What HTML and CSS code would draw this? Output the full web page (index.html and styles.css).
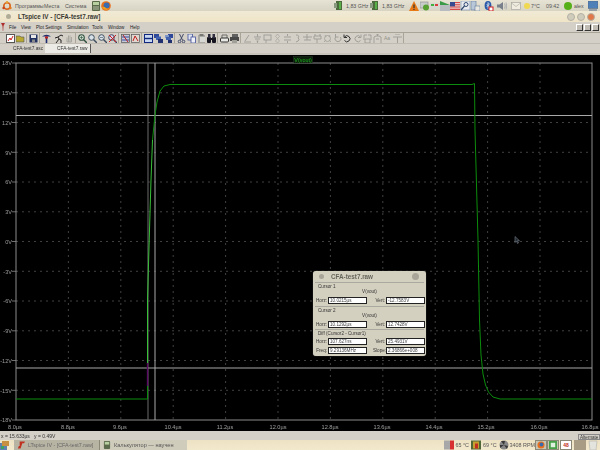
FILE: index.html
```html
<!DOCTYPE html><html lang="ru">
<head>
  <meta charset="UTF-8" />
  <title>LTspice IV - [CFA-test7.raw]</title>
  <link rel="stylesheet" href="styles.css">
</head>
<body>
<div class="screen">

  <div class="panel">
    <div class="panel-left">
      <svg class="ic-logo" viewBox="0 0 10 10"><circle cx="5" cy="5" r="3.2" fill="none" stroke="#d9641e" stroke-width="1.6"/><circle cx="5" cy="1.2" r="1.2" fill="#e8a030"/><circle cx="1.6" cy="7" r="1.2" fill="#c8401a"/><circle cx="8.4" cy="7" r="1.2" fill="#e87a1c"/></svg>
      <span class="panel-menu m-prog">Программы</span>
      <span class="panel-menu m-mesta">Места</span>
      <span class="panel-menu m-sys">Система</span>
      <svg class="ic-10 m-calc" viewBox="0 0 10 10"><rect x="1" y="0" width="8" height="10" rx="1" fill="#5c6a4c"/><rect x="2" y="1" width="6" height="3" fill="#b8d0a0"/><rect x="2" y="5" width="6" height="4" fill="#8a9478"/></svg>
      <svg class="ic-10" viewBox="0 0 10 10"><circle cx="5" cy="5" r="4.8" fill="#e8701c"/><circle cx="5.6" cy="4.4" r="3" fill="#3a6ab0"/><path d="M1 6c1 3 5 4 8 1-2 1-4 1-5-1z" fill="#f0a020"/></svg>
    </div>
    <div class="panel-right">
      <svg class="ic-cpu" viewBox="0 0 9 9"><rect x="2" y="0" width="6" height="9" fill="#4c6a3c"/><rect x="0" y="2" width="3" height="5" fill="#8a9a80"/><rect x="5" y="1" width="2" height="7" fill="#58b048"/></svg>
      <span class="freq">1,83 GHz</span>
      <svg class="ic-cpu m-cpu2" viewBox="0 0 9 9"><rect x="2" y="0" width="6" height="9" fill="#4c6a3c"/><rect x="0" y="2" width="3" height="5" fill="#8a9a80"/><rect x="5" y="1" width="2" height="7" fill="#58b048"/></svg>
      <span class="freq">1,83 GHz</span>
      <svg class="ic-10 m-warn" viewBox="0 0 10 10"><path d="M5 0l5 10H0z" fill="#e87a18"/><rect x="4.4" y="3.5" width="1.2" height="3.5" fill="#333"/><rect x="4.4" y="7.8" width="1.2" height="1.2" fill="#333"/></svg>
      <svg class="ic-10" viewBox="0 0 10 10"><rect x="0" y="1" width="8" height="6" fill="#c8ccc8" stroke="#888" stroke-width=".6"/><circle cx="6" cy="6.5" r="3" fill="#58a030"/></svg>
      <svg class="ic-10" viewBox="0 0 10 10"><rect x="0" y="2" width="10" height="6" fill="#d8d8d0"/><rect x="1" y="3" width="3" height="2" fill="#40b040"/><rect x="5" y="3" width="3" height="2" fill="#d84040"/></svg>
      <svg class="ic-10" viewBox="0 0 10 10"><rect x="0" y="4" width="10" height="6" fill="#b8bcc0"/><path d="M0 0l10 4H0z" fill="#3a9a48"/></svg>
      <svg class="ic-10" viewBox="0 0 10 8"><rect width="10" height="8" fill="#d84848"/><rect y="1.2" width="10" height="1" fill="#f0e8e8"/><rect y="3.4" width="10" height="1" fill="#f0e8e8"/><rect y="5.6" width="10" height="1" fill="#f0e8e8"/><rect width="5" height="4.4" fill="#3a4a90"/></svg>
      <svg class="ic-10" viewBox="0 0 10 10"><rect x="1" y="0" width="9" height="9" fill="#e8ecf0" stroke="#7088a8" stroke-width=".6"/><circle cx="6" cy="3.5" r="2" fill="none" stroke="#304870"/><path d="M4.5 5L1 9" stroke="#304870" stroke-width="1.2"/></svg>
      <svg class="ic-10" viewBox="0 0 10 10"><rect x="1" y="0" width="5" height="9" fill="#b8c8d8" stroke="#607898" stroke-width=".6"/><rect x="5" y="5" width="5" height="5" fill="#e8e8e0" stroke="#607898" stroke-width=".6"/></svg>
      <svg class="ic-10 m-bt" viewBox="0 0 10 10"><ellipse cx="4" cy="4.5" rx="3.4" ry="4.5" fill="#2a5aa8"/><path d="M2.6 3l2.8 3L4 7.5v-6L5.4 3 2.6 6" fill="none" stroke="#fff" stroke-width=".6"/><rect x="5" y="6" width="4" height="4" fill="#fff" stroke="#d02020"/></svg>
      <svg class="ic-10 m-vol" viewBox="0 0 10 10"><path d="M0 3.5h2.5L6 1v8L2.500 6.500H0z" fill="#78808c"/><path d="M7.500 2.500q1.500 2.500 0 5M9 1.500q1.500 3.500 0 7" fill="none" stroke="#98a0a8" stroke-width=".7"/></svg>
      <svg class="ic-10 m-mail" viewBox="0 0 10 8"><rect x=".5" y=".5" width="9" height="7" fill="#f0ece0" stroke="#a8a8a0" stroke-width=".7"/><path d="M.5 1l4.500 3.500L9.500 1" fill="none" stroke="#a8a8a0" stroke-width=".6"/></svg>
      <i class="sun"></i>
      <span class="temp">7°C</span>
      <span class="clock">09:42</span>
      <i class="user-dot"></i>
      <span class="user">alex</span>
      <svg class="ic-10 m-mon" viewBox="0 0 10 10"><rect y="0" width="10" height="7.500" fill="#5080b8" stroke="#506070" stroke-width=".5"/><rect x="1" y="8" width="8" height="2" fill="#98a0a8"/></svg>
    </div>
  </div>

  <div class="titlebar">
    <i class="win-dot"></i>
    <span class="title">LTspice IV - [CFA-test7.raw]</span>
    <div class="win-btns">
      <i class="win-btn"></i><i class="win-btn"></i><i class="win-btn close"></i>
    </div>
  </div>

  <div class="menubar">
    <svg class="pin" viewBox="0 0 4 8"><path d="M0 0h4L2.500 3 2.200 8h-.4L1.500 3z" fill="#b03030"/></svg>
    <span class="menu-item w-file">File</span>
    <span class="menu-item w-view">View</span>
    <span class="menu-item w-plot">Plot Settings</span>
    <span class="menu-item w-sim">Simulation</span>
    <span class="menu-item w-tools">Tools</span>
    <span class="menu-item w-win">Window</span>
    <span class="menu-item">Help</span>
    <div class="mdi-btns"><i></i><i></i><i></i></div>
  </div>

  <div class="toolbar">
    <b class="tb"><svg viewBox="0 0 9 9"><rect x=".5" y=".5" width="8" height="8" fill="#fff" stroke="#555"/><path d="M2 7l2-3 1 2 2-4" fill="none" stroke="#d02020"/></svg></b>
    <b class="tb"><svg viewBox="0 0 9 9"><path d="M0 2h4l1 1h3v5H0z" fill="#b8a830" stroke="#555" stroke-width=".6"/></svg></b>
    <i class="sep"></i>
    <b class="tb"><svg viewBox="0 0 9 9"><rect x=".5" y=".5" width="8" height="8" fill="#203060"/><rect x="2" y="1" width="5" height="3" fill="#e8e8e8"/><rect x="3" y="5.500" width="3" height="3" fill="#8a8a8a"/></svg></b>
    <i class="sep"></i>
    <b class="tb"><svg viewBox="0 0 9 9"><path d="M0 2.500Q4.500-1 9 2.500z" fill="#1c2a70"/><path d="M4.500 2.500V9" stroke="#1c2a70" stroke-width="1.600"/><rect x="3" y="2.500" width="3" height="2" fill="#c02020"/></svg></b>
    <i class="gap"></i>
    <b class="tb"><svg viewBox="0 0 9 9"><path d="M1 9l3-4-1-2 3-2 2 1M4 5l2 1v3M3 3L0 4" fill="none" stroke="#222" stroke-width="1"/></svg></b>
    <b class="tb"><svg viewBox="0 0 9 9"><path d="M2 8V3.500M3.500 8V1.500M5 8V1.500M6.500 8V3M2 8h4.500" fill="none" stroke="#a8a8a0"/></svg></b>
    <i class="sep"></i>
    <b class="tb"><svg viewBox="0 0 9 9"><circle cx="3.500" cy="3.500" r="2.800" fill="#d0e0d0" stroke="#305040" stroke-width="1.100"/><path d="M5.500 5.500L9 9" stroke="#305040" stroke-width="1.500"/><path d="M2 3.500h3M3.500 2v3" stroke="#305040" stroke-width=".6"/></svg></b>
    <b class="tb"><svg viewBox="0 0 9 9"><circle cx="3.500" cy="3.500" r="2.800" fill="#d8e0e8" stroke="#405060" stroke-width="1"/><path d="M5.500 5.500L9 9" stroke="#405060" stroke-width="1.500"/></svg></b>
    <b class="tb"><svg viewBox="0 0 9 9"><circle cx="3.500" cy="3.500" r="2.800" fill="#d8e0e8" stroke="#405060" stroke-width="1"/><path d="M5.500 5.500L9 9" stroke="#405060" stroke-width="1.500"/><path d="M2 3.500h3" stroke="#405060" stroke-width=".6"/></svg></b>
    <b class="tb"><svg viewBox="0 0 9 9"><circle cx="3.500" cy="3.500" r="2.800" fill="#d8d8e8" stroke="#404060" stroke-width="1"/><path d="M5.500 5.500L9 9" stroke="#404060" stroke-width="1.500"/><path d="M1 1l7 7M8 1L1 8" stroke="#c82020" stroke-width="1"/></svg></b>
    <i class="sep"></i>
    <b class="tb"><svg viewBox="0 0 9 9"><rect x=".5" y=".5" width="8" height="8" fill="#c8c8d8" stroke="#555" stroke-width=".7"/><path d="M1 3h7M1 6h7" stroke="#3050a0"/><path d="M2 1l5 7" stroke="#c02020"/></svg></b>
    <b class="tb"><svg viewBox="0 0 9 9"><rect x=".5" y=".5" width="8" height="8" fill="#e0d8d0" stroke="#555" stroke-width=".7"/><path d="M2 7l2-5 3 5" fill="none" stroke="#c02020"/></svg></b>
    <i class="sep"></i>
    <b class="tb"><svg viewBox="0 0 9 9"><rect x=".5" y=".5" width="8" height="8" fill="#c8d8f0" stroke="#102880"/><path d="M0 4.500h9" stroke="#102880" stroke-width="1.400"/></svg></b>
    <b class="tb"><svg viewBox="0 0 9 9"><rect x="0" y="0" width="5" height="4" fill="#304898"/><rect x="2" y="2.500" width="5" height="3.500" fill="#4060b0"/><rect x="4" y="5" width="5" height="4" fill="#203070"/></svg></b>
    <b class="tb"><svg viewBox="0 0 9 9"><rect x="4" y="0" width="5" height="4" fill="#304898"/><rect x="1" y="1" width="4" height="3" fill="#8098c8"/><rect x="2" y="3" width="5" height="3" fill="#4060b0"/><rect x="4" y="6" width="4" height="3" fill="#203070"/></svg></b>
    <i class="sep"></i>
    <b class="tb"><svg viewBox="0 0 9 9"><path d="M2.500 0l3 6M6.500 0l-3 6" stroke="#404868" stroke-width="1"/><circle cx="2.500" cy="7.500" r="1.300" fill="none" stroke="#404868"/><circle cx="6.500" cy="7.500" r="1.300" fill="none" stroke="#404868"/></svg></b>
    <b class="tb"><svg viewBox="0 0 9 9"><rect x="1" y="0" width="4.500" height="6" fill="#e0e4f0" stroke="#405098" stroke-width=".8"/><rect x="4" y="3" width="4.500" height="6" fill="#f0f0f8" stroke="#405098" stroke-width=".8"/></svg></b>
    <b class="tb"><svg viewBox="0 0 9 9"><rect x="1" y="1" width="7" height="8" fill="#a8a8a4"/><rect x="2.500" y="0" width="4" height="2" fill="#787874"/><rect x="3" y="3" width="5" height="5" fill="#d8d8d4"/></svg></b>
    <b class="tb"><svg viewBox="0 0 9 9"><rect x="0" y="3" width="4" height="6" rx="1" fill="#151520"/><rect x="5" y="3" width="4" height="6" rx="1" fill="#151520"/><rect x="1" y="0" width="2.500" height="4" fill="#303040"/><rect x="5.500" y="0" width="2.500" height="4" fill="#303040"/><rect x="3" y="4" width="3" height="2" fill="#151520"/></svg></b>
    <i class="sep"></i>
    <b class="tb"><svg viewBox="0 0 9 9"><path d="M2 4V1h5v3" fill="none" stroke="#555" stroke-width=".8"/><rect x=".5" y="4" width="8" height="4" rx="1" fill="#e8e8e4" stroke="#333"/></svg></b>
    <b class="tb"><svg viewBox="0 0 9 9"><rect x="2" y="0" width="6" height="3" fill="#606060"/><rect x="0" y="3" width="9" height="4" fill="#484848"/><rect x="2" y="6" width="5" height="3" fill="#a0a098"/></svg></b>
    <i class="sep"></i>
    <span class="tb off"><svg viewBox="0 0 9 9"><path d="M1 8h7M2 7l4-6" fill="none" stroke="#a0a098"/></svg></span>
    <span class="tb off"><svg viewBox="0 0 9 9"><path d="M4.500 0v3M1 3h7M2 5h5M3.500 7h2M4.500 7v2" fill="none" stroke="#a0a098"/></svg></span>
    <span class="tb off"><svg viewBox="0 0 9 9"><rect x="1" y="1" width="7" height="5" fill="none" stroke="#a0a098"/><path d="M3 6v3" stroke="#a0a098"/></svg></span>
    <span class="tb off"><svg viewBox="0 0 9 9"><path d="M4.500 0l2 2.500-2 2-2-2zM4.500 4.500l2 2.500-2 2-2-2z" fill="none" stroke="#a8a8a0" stroke-width=".8"/></svg></span>
    <span class="tb off"><svg viewBox="0 0 9 9"><path d="M1 3h7M1 6h7M4.500 0v2M4.500 7v2" stroke="#a0a098"/></svg></span>
    <span class="tb off"><svg viewBox="0 0 9 9"><path d="M3 1q4 0 2 3 3 2-2 4" fill="none" stroke="#a0a098"/></svg></span>
    <span class="tb off"><svg viewBox="0 0 9 9"><path d="M0 3h9M4 0v6M1 6h7" stroke="#a0a098"/></svg></span>
    <span class="tb off"><svg viewBox="0 0 9 9"><path d="M1 2h7v3H1zM4 5v4M2 2V0M7 2V0" fill="none" stroke="#a0a098"/></svg></span>
    <span class="tb off"><svg viewBox="0 0 9 9"><circle cx="4.500" cy="4.500" r="3" fill="none" stroke="#a8a8a0"/><path d="M2 1l1 2M7 1L6 3M1 8l2-2M8 8L6 6" stroke="#a8a8a0"/></svg></span>
    <span class="tb off"><svg viewBox="0 0 9 9"><path d="M7.500 3a3 3 0 1 1-5 0M2.500 0v3h3" fill="none" stroke="#a0a098"/></svg></span>
    <b class="tb"><svg viewBox="0 0 9 9"><path d="M1.500 3a3 3 0 1 1 0 3.500M1 .5V3.500h3" fill="none" stroke="#303030" stroke-width="1"/></svg></b>
    <span class="tb off"><svg viewBox="0 0 9 9"><path d="M7.500 3a3 3 0 1 0 0 3.500M8 .5V3.500H5" fill="none" stroke="#a0a098"/></svg></span>
    <span class="tb off"><svg viewBox="0 0 9 9"><path d="M1 4V1h3M8 4V1H5M0 5h9M2 5v4h5V5" fill="none" stroke="#a0a098"/></svg></span>
    <span class="tb off"><svg viewBox="0 0 9 9"><path d="M3 0h3M4.500 0v2M1 3l2-1h3l2 1v6M1 3v6M3 5h3" fill="none" stroke="#a0a098"/></svg></span>
    <span class="tb off aa">Aa</span>
    <span class="tb off"><svg viewBox="0 0 9 9"><path d="M0 3h9M4.500 3v6M2 0h5" stroke="#a0a098"/></svg></span>
    <i class="sep"></i>
  </div>

  <div class="tabs">
    <span class="tab">CFA-test7.asc</span>
    <span class="tab active">CFA-test7.raw</span>
  </div>

  <div class="plot">
    <svg class="plot-svg" viewBox="0 55 600 376">
      <g class="grid">
        <path d="M68.400 63V420M120.800 63V420M173.200 63V420M225.600 63V420M278 63V420M330.400 63V420M382.800 63V420M435.200 63V420M487.600 63V420M540 63V420"/>
        <path d="M16 92.800H592M16 122.500H592M16 152.300H592M16 182H592M16 211.800H592M16 241.500H592M16 271.300H592M16 301H592M16 330.800H592M16 360.500H592M16 390.300H592"/>
      </g>
      <rect class="axes" x="16" y="63" width="576" height="357"/>
      <path class="cursor dim" d="M148 63V420"/>
      <path class="cursor" d="M155 63V420M16 115.500H592M16 368H592"/>
      <path class="trace" d="M16 399H147.500V386"/>
      <path class="trace-mid" d="M147.500 386V363"/>
      <path class="trace bright" d="M147.500 363V300L149.500 230 151 180 152.500 140"/>
      <path class="trace" d="M152.500 140L155 115 157 102 160 91 164 86 170 84.500H472L474.500 83.500 475 130 478 240 479.500 320 481 355 483 374 485.500 385 488.500 392 493 397 500 399H592"/>
      <g class="ylabels">
        <text x="12" y="65">18V</text><text x="12" y="95">15V</text><text x="12" y="125">12V</text>
        <text x="12" y="154.500">9V</text><text x="12" y="184">6V</text><text x="12" y="214">3V</text>
        <text x="12" y="243.500">0V</text><text x="12" y="273.500">-3V</text><text x="12" y="303">-6V</text>
        <text x="12" y="333">-9V</text><text x="12" y="362.500">-12V</text><text x="12" y="392.500">-15V</text><text x="12" y="422">-18V</text>
      </g>
      <path class="ticks" d="M12 63h4M12 420h4M12 92.800h4M12 122.500h4M12 152.300h4M12 182h4M12 211.800h4M12 241.500h4M12 271.300h4M12 301h4M12 330.800h4M12 360.500h4M12 390.300h4"/>
      <g class="xlabels">
        <text x="15" y="429">8.0µs</text><text x="68" y="429">8.8µs</text><text x="120" y="429">9.6µs</text>
        <text x="173" y="429">10.4µs</text><text x="225" y="429">11.2µs</text><text x="278" y="429">12.0µs</text>
        <text x="330" y="429">12.8µs</text><text x="382" y="429">13.6µs</text><text x="434" y="429">14.4µs</text>
        <text x="486" y="429">15.2µs</text><text x="539" y="429">16.0µs</text><text x="590" y="429">16.8µs</text>
      </g>
      <rect class="legend-box" x="293.500" y="56.500" width="19" height="6.500"/>
      <text class="legend" x="303" y="61.800">V(vout)</text>
      <path class="mouse" d="M515 236.500v6l1.500-1.500 1 2.500 1-.5-1-2.300h2z"/>
    </svg>

    <div class="cursor-win">
      <div class="cw-title">
        <i class="cw-dot"></i>
        <span>CFA-test7.raw</span>
        <i class="cw-dot big"></i>
      </div>
      <div class="cw-group">
        <div class="cw-label">Cursor 1</div>
        <div class="cw-name">V(vout)</div>
        <div class="cw-row">
          <label>Horz:</label><span class="field">10.0215µs</span>
          <label>Vert:</label><span class="field">-12.7583V</span>
        </div>
      </div>
      <div class="cw-group">
        <div class="cw-label">Cursor 2</div>
        <div class="cw-name">V(vout)</div>
        <div class="cw-row">
          <label>Horz:</label><span class="field">10.1292µs</span>
          <label>Vert:</label><span class="field">12.7428V</span>
        </div>
      </div>
      <div class="cw-group diff">
        <div class="cw-label">Diff (Cursor2 - Cursor1)</div>
        <div class="cw-row">
          <label>Horz:</label><span class="field">107.627ns</span>
          <label>Vert:</label><span class="field">25.4931V</span>
        </div>
        <div class="cw-row">
          <label>Freq:</label><span class="field">9.29136MHz</span>
          <label>Slope:</label><span class="field">2.36866e+008</span>
        </div>
      </div>
    </div>
  </div>

  <div class="statusbar">
    <span>x = 15.633µs &nbsp; y = 0.49V</span>
    <span class="alt">Alternate</span>
  </div>

  <div class="taskbar">
    <svg class="ic-start" viewBox="0 0 9 9"><rect y="2" width="7" height="7" fill="#6080b0"/><rect x="2" width="7" height="5" fill="#c89040"/><rect x="1" y="5" width="3" height="3" fill="#40a060"/></svg>
    <div class="task current">
      <svg class="ic-lt" viewBox="0 0 9 8"><path d="M3 0h6L8 2H6L4 8H1l1-3h1z" fill="#c03020"/></svg>
      <span>LTspice IV - [CFA-test7.raw]</span>
    </div>
    <div class="task other">
      <svg class="ic-lt" viewBox="0 0 9 9"><rect x="1" y="0" width="7" height="9" rx="1" fill="#5c6a4c"/><rect x="2" y="1" width="5" height="3" fill="#b8d0a0"/></svg>
      <span>Калькулятор — научен</span>
    </div>
    <div class="tray">
      <svg class="ic-10 tr-hdd" viewBox="0 0 10 9"><rect width="6" height="9" fill="#a8a8a8"/><rect x="6" width="4" height="9" fill="#d83030"/></svg>
      <span>65 °C</span>
      <svg class="ic-10 tr-gpu" viewBox="0 0 10 9"><rect width="10" height="9" fill="#506838"/><rect x="2" y="1" width="6" height="7" fill="#c8a030"/><rect x="4" y="3" width="3" height="5" fill="#c03020"/></svg>
      <span>69 °C</span>
      <svg class="ic-10 tr-fan" viewBox="0 0 10 10"><circle cx="5" cy="5" r="4.500" fill="#888"/><path d="M5 5L2 1h4zM5 5l4 1-1 3zM5 5L1 8V5z" fill="#383838"/></svg>
      <span>3408 RPM</span>
      <div class="launcher"><svg viewBox="0 0 9 9"><circle cx="4.500" cy="4.500" r="4" fill="#e8701c"/><circle cx="5" cy="4" r="2.200" fill="#3a6ab0"/></svg></div>
      <div class="launcher"><svg viewBox="0 0 9 9"><rect width="9" height="9" fill="#48a048"/><rect x="2" y="2" width="5" height="5" fill="#e0f0e0"/></svg></div>
      <div class="launcher white"><span>48</span></div>
      <div class="launcher tan"></div>
      <svg class="ic-10 tr-trash" viewBox="0 0 10 10"><path d="M1 1h8L8 10H2z" fill="#e4e4de" stroke="#b8b8b0" stroke-width=".7"/></svg>
    </div>
  </div>

</div>
</body>
</html>
```

FILE: styles.css
```css
html, body { margin: 0; padding: 0; background: #000; }
body { font-family: "Liberation Sans", Arial, sans-serif; }
i, b { font-style: normal; font-weight: normal; }
svg { display: block; }
.screen { width: 600px; height: 450px; display: flex; flex-direction: column; overflow: hidden; position: relative; filter: blur(0.35px); }

/* gnome top panel */
.panel { height: 11px; flex: none; display: flex; justify-content: space-between; align-items: center; background: linear-gradient(#e6e2d4, #d8d4c4); font-size: 5.3px; color: #555; }
.panel-left, .panel-right { display: flex; align-items: center; }
.ic-logo { width: 10px; height: 10px; margin-left: 2px; }
.ic-10 { width: 10px; height: 10px; flex: none; }
.ic-cpu { width: 9px; height: 9px; flex: none; }
.panel-menu { white-space: nowrap; }
.m-prog { margin-left: 3px; width: 25px; }
.m-mesta { margin-left: 4px; width: 17px; }
.m-sys { margin-left: 4px; width: 22px; }
.m-calc { margin-left: 4px; }
.panel-right { padding-right: 2px; }
.freq { margin-left: 3px; width: 23px; white-space: nowrap; }
.m-cpu2 { margin-left: 1px; }
.m-warn { margin-left: 4px; margin-right: 1px; }
.m-bt { margin-left: 4px; margin-right: 3px; }
.m-vol { margin-right: 4px; }
.m-mail { margin-right: 3px; }
.sun { width: 6px; height: 6px; border-radius: 50%; background: #f0d850; margin-right: 1px; }
.temp { width: 11px; }
.clock { margin-left: 4px; width: 16px; }
.user-dot { width: 8px; height: 8px; border-radius: 50%; background: #58b018; margin-left: 2px; margin-right: 2px; }
.user { width: 11px; }
.m-mon { margin-left: 3px; }

/* window title */
.titlebar { height: 11px; flex: none; display: flex; align-items: center; background: linear-gradient(#f0ead6, #efe4c6); color: #222; }
.win-dot { width: 5px; height: 5px; margin-left: 6px; border-radius: 50%; background: #b0ac98; }
.title { margin-left: 7px; font-size: 6.3px; font-weight: bold; color: #3a3a34; white-space: nowrap; }
.win-btns { margin-left: auto; margin-right: 5px; display: flex; gap: 2px; }
.win-btn { width: 6px; height: 6px; border-radius: 50%; background: #d0ccbc; border: 0.5px solid #b4b0a4; }
.win-btn.close { background: #e07848; }

.menubar { height: 10px; flex: none; display: flex; align-items: center; background: #d4d0c8; font-size: 4.6px; color: #222; }
.pin { width: 4px; height: 8px; margin-left: 1px; margin-right: 4px; }
.menu-item { white-space: nowrap; }
.w-file { width: 12px; }
.w-view { width: 15px; }
.w-plot { width: 31px; }
.w-sim { width: 25px; }
.w-tools { width: 16px; }
.w-win { width: 22px; }
.mdi-btns { margin-left: auto; display: flex; gap: 1px; margin-right: 1px; }
.mdi-btns i { width: 5px; height: 5px; background: #c0bcb4; border: 0.5px solid #333; border-top-color: #fff; border-left-color: #fff; }

.toolbar { height: 10px; flex: none; display: flex; align-items: center; padding-left: 5px; background: #d4d0c8; border-top: 1px solid #a8a498; }
.tb { width: 10px; height: 10px; display: flex; align-items: center; justify-content: center; flex: none; }
.tb svg { width: 9px; height: 9px; }
.tb.aa { font-size: 5px; color: #909088; }
.sep { width: 1px; height: 10px; margin: 0 1px; background: #a8a498; flex: none; }
.gap { width: 3px; flex: none; }

.tabs { height: 9px; flex: none; display: flex; padding-left: 3px; background: #d4d0c8; border-top: 1px solid #c0bcb4; font-size: 4.8px; color: #333; align-items: stretch; }
.tab { display: flex; align-items: center; width: 42px; padding-left: 10px; box-sizing: border-box; white-space: nowrap; }
.tab.active { width: 46px; padding-left: 12px; background: #ecebe6; border-right: 1px solid #555; }

/* waveform */
.plot { height: 376px; flex: none; position: relative; background: #000; border-top: 2px solid #c8c4bc; }
.plot-svg { width: 600px; height: 376px; }
.grid path { fill: none; stroke: #505050; stroke-width: 0.8; stroke-dasharray: 2 4; }
.axes { fill: none; stroke: #8c8c8c; stroke-width: 1; }
.ticks { stroke: #8c8c8c; stroke-width: 0.8; }
.cursor { fill: none; stroke: #a8a8a8; stroke-width: 1; }
.cursor.dim { stroke: #5a5a5a; stroke-width: 1.2; }
.trace { fill: none; stroke: #0c8c0c; stroke-width: 1; }
.trace.bright { stroke: #38c038; }
.trace-mid { fill: none; stroke: #5a0c60; stroke-width: 1.4; }
.ylabels text { font-size: 5.6px; fill: #9a9a9a; text-anchor: end; }
.xlabels text { font-size: 5.6px; fill: #a0a0a0; text-anchor: middle; }
.legend { font-size: 5.4px; fill: #20b020; text-anchor: middle; }
.legend-box { fill: #0c200c; stroke: #406040; stroke-width: 0.5; stroke-dasharray: 1 1; }
.mouse { fill: #20282c; stroke: #8890a0; stroke-width: 0.5; }

.cursor-win { position: absolute; left: 313px; top: 216px; width: 113px; height: 85px; box-sizing: border-box; padding: 0 2px; border-radius: 3px; background: #d4d0c0; font-size: 4.6px; color: #333; box-shadow: 0 0 1px #888; }
.cw-title { height: 11px; display: flex; align-items: center; padding: 0 5px 0 4px; font-size: 6.3px; font-weight: bold; color: #66665c; }
.cw-title span { margin-left: 7px; }
.cw-dot { width: 5px; height: 5px; border-radius: 50%; background: #a8a498; }
.cw-dot.big { width: 7px; height: 7px; margin-left: auto; }
.cw-group { height: 24px; box-sizing: border-box; border-top: 1px solid #aaa9a0; }
.cw-group + .cw-group { height: 23px; }
.cw-group.diff { height: 27px; }
.cw-label { height: 5px; line-height: 5px; padding-left: 3px; margin-top: 1px; }
.cw-name { height: 5px; line-height: 5px; text-align: center; margin-bottom: 2px; }
.diff .cw-label { margin-bottom: 1px; }
.cw-row { display: flex; align-items: center; height: 9px; }
.cw-row label { width: 12px; text-align: right; flex: none; white-space: nowrap; }
.field { width: 39px; height: 7px; line-height: 6px; background: #fff; border: 0.5px solid #222; box-sizing: border-box; flex: none; margin-left: 1px; padding-left: 1px; overflow: hidden; white-space: nowrap; font-size: 4.6px; color: #444; }
.field + label { margin-left: 6px; }

.statusbar { height: 9px; flex: none; display: flex; justify-content: space-between; align-items: center; background: #d4d0c8; font-size: 5px; color: #333; padding-left: 1px; }
.alt { height: 6px; line-height: 6px; width: 22px; align-self: flex-end; border: 0.5px solid #888; box-sizing: border-box; white-space: nowrap; font-size: 4.6px; padding-left: 1px; }

/* bottom panel */
.taskbar { height: 10px; flex: none; display: flex; align-items: center; background: linear-gradient(#eee2c4, #f2e8cc); color: #555; }
.ic-start { width: 9px; height: 9px; flex: none; margin-right: 5px; }
.task { width: 86px; height: 10px; flex: none; display: flex; align-items: center; gap: 3px; padding-left: 3px; box-sizing: border-box; white-space: nowrap; overflow: hidden; font-size: 5.3px; }
.task.current { background: #b8b4a4; border-right: 1px solid #8c8878; color: #666; }
.task.other { width: 87px; background: #d0ccbc; font-size: 5.6px; }
.ic-lt { width: 8px; height: 8px; flex: none; }
.tray { margin-left: auto; display: flex; align-items: center; padding-right: 2px; white-space: nowrap; }
.tray span { font-size: 5.4px; }
.tr-hdd { margin-right: 1px; }
.tr-gpu { margin-left: 2px; margin-right: 2px; }
.tr-fan { margin-left: 2px; margin-right: 1px; }
.launcher { width: 12px; height: 10px; display: flex; align-items: center; justify-content: center; box-sizing: border-box; border: 1px solid #8c8878; background: #c8c4b4; }
.launcher svg { width: 8px; height: 8px; }
.launcher.white { background: #fff; margin-left: 1px; }
.launcher.white span { font-size: 5px; font-weight: bold; color: #c03020; }
.launcher.tan { background: #a89c84; border-color: #a89c84; margin-left: 2px; }
.tr-trash { margin-left: 2px; }
```
